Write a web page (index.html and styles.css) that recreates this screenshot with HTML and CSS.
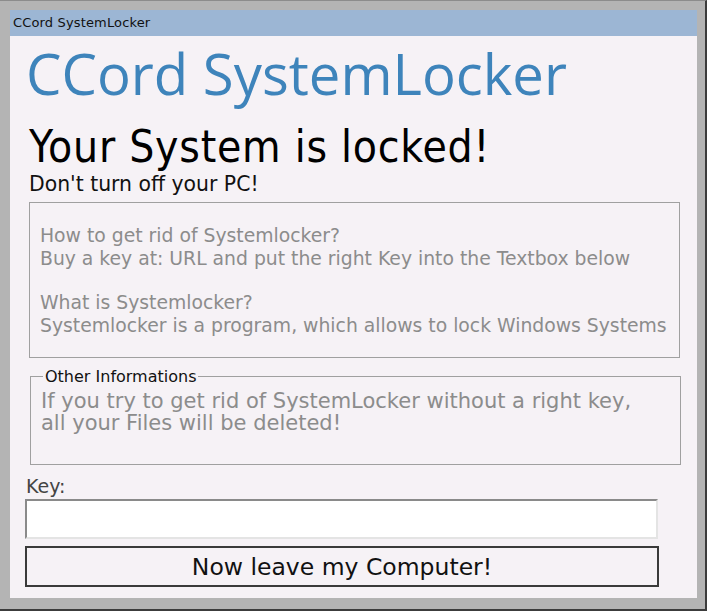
FILE: index.html
```html
<!DOCTYPE html>
<html lang="en">
<head>
    <meta charset="UTF-8">
    <title>CCord SystemLocker</title>
    <link rel="stylesheet" href="styles.css">
</head>
<body>
    <div class="frame">
        <div class="window">
            <div class="titlebar">CCord SystemLocker</div>
            <div class="client">
                <div class="brand">CCord SystemLocker</div>
                <h1>Your System is locked!</h1>
                <p class="warn">Don't turn off your PC!</p>

                <div class="info-box">
                    <p>How to get rid of Systemlocker?<br>Buy a key at: URL and put the right Key into the Textbox below</p>
                    <p>What is Systemlocker?<br>Systemlocker is a program, which allows to lock Windows Systems</p>
                </div>

                <fieldset class="other">
                    <legend>Other Informations</legend>
                    <p>If you try to get rid of SystemLocker without a right key,<br>all your Files will be deleted!</p>
                </fieldset>

                <label class="key-label" for="key">Key:</label>
                <input type="text" id="key" class="key-input">
                <button class="leave">Now leave my Computer!</button>
            </div>
        </div>
    </div>
</body>
</html>
```

FILE: styles.css
```css
body {
    margin: 0;
    font-family: "DejaVu Sans", sans-serif;
}

.frame {
    width: 707px;
    height: 611px;
    box-sizing: border-box;
    background: #b4b4b4;
    border-top: 1px solid #8c8c8c;
    border-right: 2px solid #3c3c3c;
    border-bottom: 2px solid #3c3c3c;
    padding: 9px 8px 11px 10px;
}

.window {
    height: 100%;
    display: flex;
    flex-direction: column;
    background: #f6f2f6;
}

.titlebar {
    height: 26px;
    line-height: 26px;
    background: #9cb6d4;
    padding-left: 3px;
    font-size: 13px;
    letter-spacing: 0.15px;
    color: #111;
}

.client {
    flex: 1;
    padding: 0 0 0 15px;
}

.brand {
    font-family: "Open Sans", sans-serif;
    font-size: 56.3px;
    line-height: 70px;
    color: #3e84bb;
    margin: 2px 0 0 1px;
}

h1 {
    font-family: "DejaVu Sans Condensed", "DejaVu Sans", sans-serif;
    font-weight: normal;
    font-size: 44px;
    line-height: 49px;
    letter-spacing: 0.75px;
    margin: 14px 0 0 4px;
    color: #000;
}

.warn {
    font-size: 20.4px;
    line-height: 24px;
    margin: 1px 0 0 4px;
    color: #111;
}

.info-box {
    width: 651px;
    height: 156px;
    box-sizing: border-box;
    border: 1px solid #a0a0a0;
    margin: 6px 0 0 4px;
    padding: 21px 0 0 10px;
    white-space: nowrap;
}

.info-box p {
    margin: 0 0 21px;
    font-size: 18.8px;
    line-height: 23px;
    color: #8c8c8c;
}

.other {
    width: 651px;
    height: 98px;
    box-sizing: border-box;
    border: 1px solid #a0a0a0;
    margin: 9px 0 0 5px;
    padding: 4px 10px 0;
    white-space: nowrap;
}

.other p {
    margin: 0;
    font-size: 21px;
    line-height: 22px;
    color: #8c8c8c;
}

.other legend {
    font-size: 16px;
    color: #111;
    padding: 0 2px;
    margin-left: 2px;
}

.key-label {
    display: block;
    font-size: 19px;
    line-height: 22px;
    color: #444;
    margin: 10px 0 0 1px;
}

.key-input {
    display: block;
    width: 633px;
    height: 40px;
    box-sizing: border-box;
    margin: 2px 0 0 0;
    border: 2px solid #8a8a8a;
    border-right-color: #e4e4e4;
    border-bottom-color: #e4e4e4;
    background: #fff;
}

.leave {
    display: block;
    width: 634px;
    height: 41px;
    margin-top: 7px;
    background: #f6f2f6;
    border: 2px solid #3a3a3a;
    font-family: "DejaVu Sans", sans-serif;
    font-size: 23.5px;
    color: #111;
}
```
